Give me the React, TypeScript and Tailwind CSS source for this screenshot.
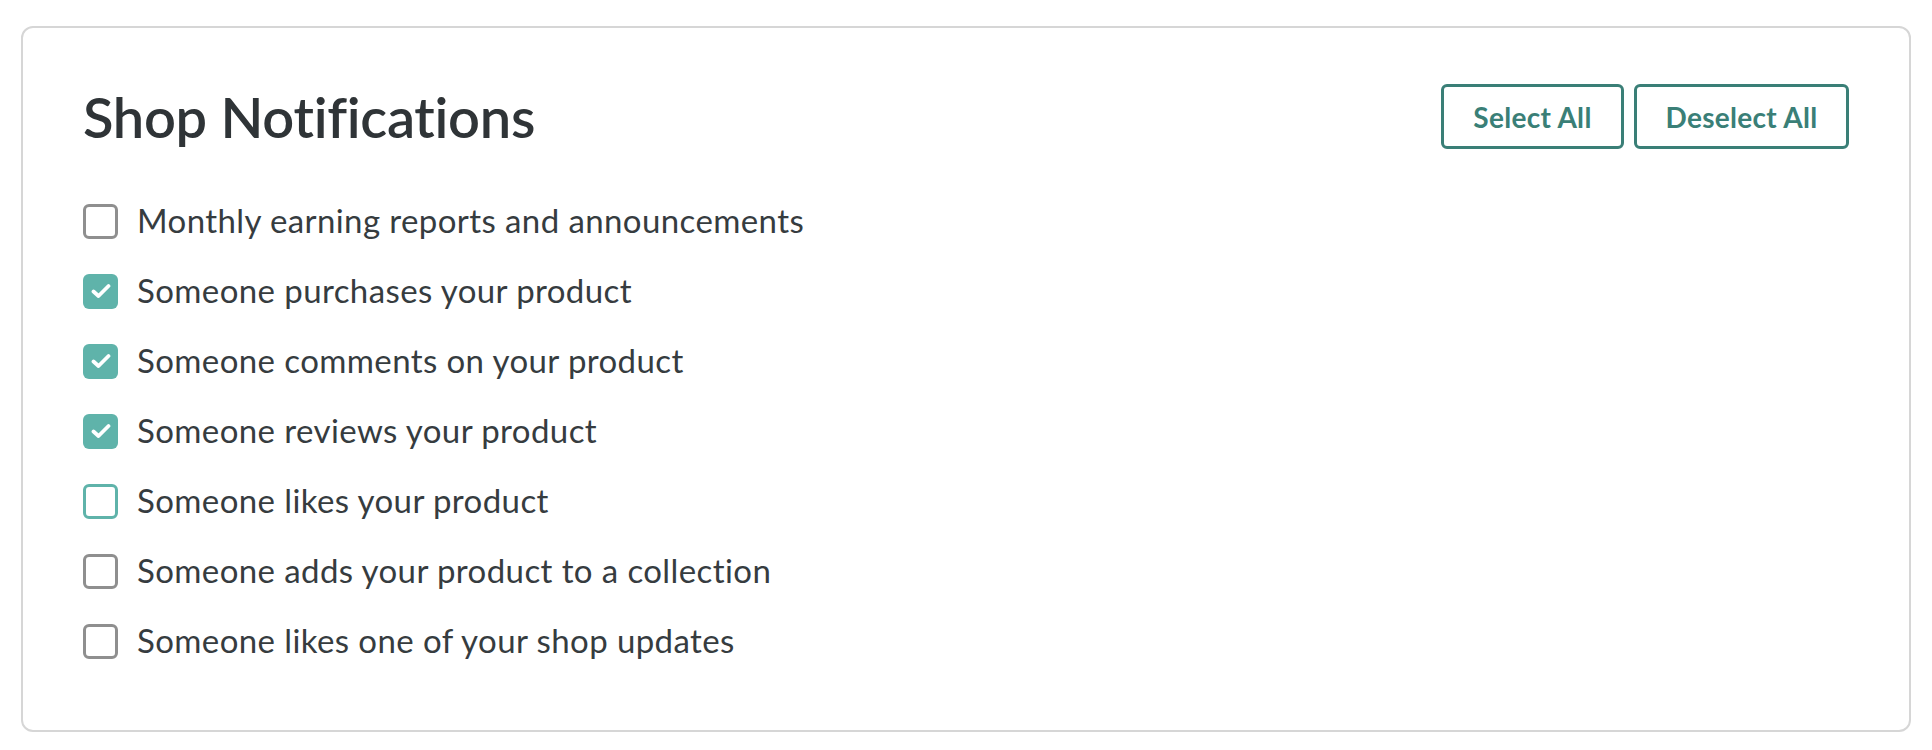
import { useState } from "react";

const ITEMS = [
  { id: "earnings", label: "Monthly earning reports and announcements", checked: false },
  { id: "purchase", label: "Someone purchases your product", checked: true },
  { id: "comment", label: "Someone comments on your product", checked: true },
  { id: "review", label: "Someone reviews your product", checked: true },
  { id: "like", label: "Someone likes your product", checked: false, focused: true },
  { id: "collection", label: "Someone adds your product to a collection", checked: false },
  { id: "update", label: "Someone likes one of your shop updates", checked: false },
];

function Check({ on, focused }: { on: boolean; focused?: boolean }) {
  if (on) {
    return (
      <span className="flex h-[35px] w-[35px] shrink-0 items-center justify-center rounded-[6px] bg-[#5fb3aa]">
        <svg width="20" height="16" viewBox="0 0 20 16" fill="none">
          <path d="M2.5 8.5 L7.5 13 L17.5 3" stroke="white" strokeWidth="3.8" strokeLinecap="round" strokeLinejoin="round" />
        </svg>
      </span>
    );
  }
  return (
    <span
      className={`h-[35px] w-[35px] shrink-0 rounded-[6px] border-[3px] bg-white ${
        focused ? "border-[#5fb3aa]" : "border-[#8f8f8f]"
      }`}
    />
  );
}

export default function App() {
  const [checked, setChecked] = useState<Record<string, boolean>>(
    Object.fromEntries(ITEMS.map((i) => [i.id, i.checked]))
  );

  const setAll = (v: boolean) =>
    setChecked(Object.fromEntries(ITEMS.map((i) => [i.id, v])));

  return (
    <div className="bg-white px-[21px] pt-[26px] pb-[18px]" style={{ fontFamily: "Lato, 'Noto Sans', sans-serif" }}>
      <div className="h-[706px] rounded-[12px] border-2 border-[#d6d6d6] px-[60px] pt-[56px]">
        {/* Header */}
        <div className="flex items-center justify-between">
          <h2 className="text-[56px] font-semibold leading-none tracking-[-0.3px] text-[#2f3437]">Shop Notifications</h2>
          <div className="flex gap-[10px]">
            <button
              onClick={() => setAll(true)}
              className="h-[65px] w-[183px] rounded-[6px] border-[3.5px] border-[#3a7f77] text-[28px] font-bold tracking-[0.3px] text-[#3a7f77]"
            >
              Select All
            </button>
            <button
              onClick={() => setAll(false)}
              className="h-[65px] w-[215px] rounded-[6px] border-[3.5px] border-[#3a7f77] text-[28px] font-bold tracking-[0.3px] text-[#3a7f77]"
            >
              Deselect All
            </button>
          </div>
        </div>

        {/* List */}
        <ul className="mt-[37px]">
          {ITEMS.map((item) => (
            <li
              key={item.id}
              onClick={() => setChecked((c) => ({ ...c, [item.id]: !c[item.id] }))}
              className="flex h-[70px] cursor-pointer items-center gap-[19px]"
            >
              <Check on={checked[item.id]} focused={item.focused} />
              <span className="text-[33px] tracking-[0.4px] text-[#363c3f]">{item.label}</span>
            </li>
          ))}
        </ul>
      </div>
    </div>
  );
}
